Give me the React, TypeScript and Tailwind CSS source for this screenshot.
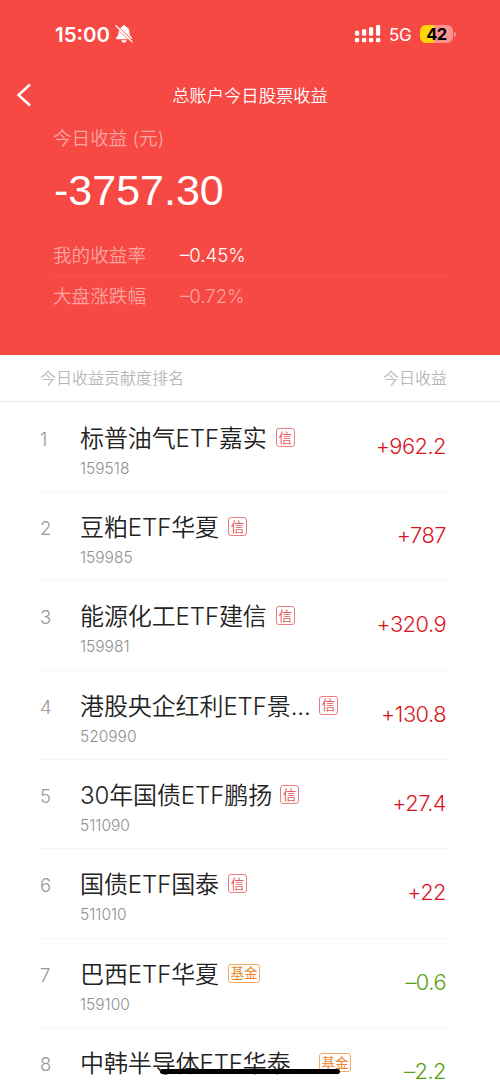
import React from 'react';
import clsx from 'clsx';

interface Holding {
  rank: number;
  name: string;
  code?: string;
  tag: '信' | '基金';
  profit: string;
  nameClass?: string;
}

const holdings: Holding[] = [
  { rank: 1, name: '标普油气ETF嘉实', code: '159518', tag: '信', profit: '+962.2' },
  { rank: 2, name: '豆粕ETF华夏', code: '159985', tag: '信', profit: '+787' },
  { rank: 3, name: '能源化工ETF建信', code: '159981', tag: '信', profit: '+320.9' },
  { rank: 4, name: '港股央企红利ETF景...', code: '520990', tag: '信', profit: '+130.8', nameClass: 'w-[230px]' },
  { rank: 5, name: '30年国债ETF鹏扬', code: '511090', tag: '信', profit: '+27.4', nameClass: 'w-[191px]' },
  { rank: 6, name: '国债ETF国泰', code: '511010', tag: '信', profit: '+22' },
  { rank: 7, name: '巴西ETF华夏', code: '159100', tag: '基金', profit: '–0.6' },
  { rank: 8, name: '中韩半导体ETF华泰', tag: '基金', profit: '–2.2', nameClass: 'w-[230px]' },
];

const SilentBell: React.FC = () => (
  <svg width="18" height="18" viewBox="0 0 18 18" fill="none">
    <path
      d="M9 .3c1 0 1.700.6 1.800 1.500 2.500.8 3.700 2.700 3.700 5.200 0 3.200.8 4.300 2.200 5.500.7.700.3 1.700-.7 1.700H2c-1 0-1.400-1-.7-1.700 1.400-1.200 2.200-2.300 2.200-5.500 0-2.500 1.200-4.400 3.700-5.200C7.300.9 8 .3 9 .3Z"
      fill="#fff"
    />
    <path d="M6.300 15.200h5.400c-.2 1.400-1.300 2.300-2.700 2.300s-2.500-.9-2.700-2.300Z" fill="#fff" />
    <path d="M1.800 0 18 16.200" stroke="#f64944" strokeWidth="1" />
    <path d="M1 .8 17 16.800" stroke="#fff" strokeWidth="1.300" strokeLinecap="round" />
    <path d="M0 1.600 16 17.600" stroke="#f64944" strokeWidth=".7" />
  </svg>
);

const SignalBars: React.FC = () => (
  <svg width="26" height="18" viewBox="0 0 26 18" fill="#fff">
    <rect x="0" y="5.700" width="4.200" height="5" rx="1.200" />
    <rect x="7" y="4.200" width="4.200" height="6.500" rx="1.200" />
    <rect x="14" y="2.300" width="4.200" height="8.400" rx="1.200" />
    <rect x="21" y="0" width="4.200" height="10.700" rx="1.200" />
    <rect x="0" y="13" width="4.200" height="4.200" rx="1.200" />
    <rect x="7" y="13" width="4.200" height="4.200" rx="1.200" />
    <rect x="14" y="13" width="4.200" height="4.200" rx="1.200" />
    <rect x="21" y="13" width="4.200" height="4.200" rx="1.200" />
  </svg>
);

const StatusBar: React.FC = () => (
  <div className="flex h-[68px] items-center justify-between pl-[55px] pr-[44px]">
    <div className="flex items-center">
      <span className="w-[60px] pt-px text-[20.500px] font-semibold leading-6 text-white">15:00</span>
      <SilentBell />
    </div>
    <div className="flex items-center">
      <SignalBars />
      <span className="ml-[8px] w-[31px] pt-[2px] text-[17px] font-normal leading-6 tracking-[-0.3px] text-white">5G</span>
      <div className="flex h-[18px] w-[33px] items-center justify-center rounded-[6px] bg-linear-to-r from-[#ffd60a] from-42% to-[#fb9391] to-42% text-[16.500px] font-bold leading-none tracking-[-0.6px] text-black">
        42
      </div>
      <div className="ml-[1px] h-[5px] w-[2px] rounded-r-full bg-[#fb9391]" />
    </div>
  </div>
);

const HoldingRow: React.FC<{ holding: Holding }> = ({ holding }) => (
  <li className="mr-[53px] ml-[40px] flex h-[89.3px] shrink-0 border-b border-[#f6f6f6]">
    <span className="w-10 pt-[24px] text-[18.500px] leading-6 text-[#999]">{holding.rank}</span>
    <div className="min-w-0 flex-1 pt-[20px]">
      <div className="flex items-start">
        <span className={clsx('whitespace-nowrap text-[24px] font-[350] leading-[32px] tracking-[-0.1px] text-[#222]', holding.nameClass)}>
          {holding.name}
        </span>
        <span
          className={clsx(
            'mt-[5px] ml-[9px] flex h-[19px] items-center justify-center rounded-[3px] border text-[13.500px] font-normal leading-none',
            holding.tag === '信' ? 'w-[19px] border-[#ea7d80] text-[#e0585c]' : 'w-[32px] border-[#f5a966] text-[#ee8430]'
          )}
        >
          <span className="translate-y-[0.5px]">{holding.tag}</span>
        </span>
      </div>
      {holding.code && (
        <div className="mt-[4px] text-[15.500px] leading-5 text-[#8f8f8f]">{holding.code}</div>
      )}
    </div>
    <span
      className={clsx(
        'h-[58px] pt-[29px] pr-[1px] text-[21.800px] font-[350] leading-7 tracking-[-0.5px]',
        holding.profit.startsWith('+') ? 'text-[#d9141e]' : 'text-[#56a010]'
      )}
    >
      {holding.profit}
    </span>
  </li>
);

const App: React.FC = () => {
  return (
    <div className="relative flex h-[1084px] w-[500px] flex-col overflow-hidden bg-white font-['Inter','Noto_Sans_CJK_SC',sans-serif] font-light">
      <header className="h-[355px] shrink-0 bg-[#f64944]">
        <StatusBar />
        <div className="grid h-[54px] grid-cols-[60px_1fr_60px] items-center">
          <button type="button" aria-label="返回" className="pl-[16px]">
            <svg width="16" height="24" viewBox="0 0 16 24" fill="none" stroke="#fff" strokeWidth="2.400">
              <path d="M14 1.500 2.500 12 14 22.500" />
            </svg>
          </button>
          <h1 className="pt-px text-center text-[17.300px] font-[350] leading-6 text-white">总账户今日股票收益</h1>
        </div>
        <div className="mr-[53px] ml-[53px]">
          <div className="mt-[4px] text-[18.600px] font-[350] leading-6 text-[#fba4a1]">今日收益 (元)</div>
          <div className="mt-[15px] ml-px font-['Liberation_Sans',sans-serif] text-[43px] font-normal leading-[50px] text-white">
            -3757.30
          </div>
          <div className="mt-[21px] flex h-[40px] items-center border-b border-[#f7554f] pt-px text-[18.600px]">
            <span className="w-[127px] font-[350] text-[#fba4a1]">我的收益率</span>
            <span className="font-[350] text-white">–0.45%</span>
          </div>
          <div className="flex h-[40px] items-center pt-px text-[18.600px]">
            <span className="w-[127px] font-[350] text-[#fba4a1]">大盘涨跌幅</span>
            <span className="text-[#fba4a1]">–0.72%</span>
          </div>
        </div>
      </header>

      <div className="flex h-[47px] shrink-0 items-center justify-between border-b border-[#e9e9e9] pr-[53px] pl-[40px] text-[16px] font-[350] text-[#b8b8b8]">
        <span>今日收益贡献度排名</span>
        <span>今日收益</span>
      </div>

      <ul className="flex flex-col pt-[0.800px]">
        {holdings.map((holding) => (
          <HoldingRow key={holding.rank} holding={holding} />
        ))}
      </ul>

      {/* home indicator */}
      <div className="absolute bottom-[10px] left-[160px] h-[5px] w-[180px] rounded-full bg-black" />
    </div>
  );
};

export default App;
